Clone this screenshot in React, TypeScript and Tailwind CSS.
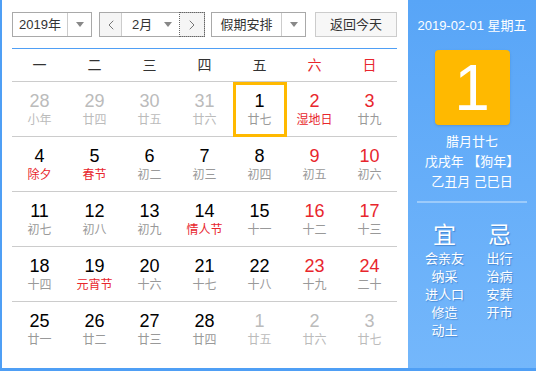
import { ChevronLeft, ChevronRight } from 'lucide-react'

type Day = {
    d: number
    lunar: string
    other?: boolean
    weekend?: boolean
    festival?: boolean
    today?: boolean
}

const weeks: Day[][] = [
    [
        { d: 28, lunar: '小年', other: true },
        { d: 29, lunar: '廿四', other: true },
        { d: 30, lunar: '廿五', other: true },
        { d: 31, lunar: '廿六', other: true },
        { d: 1, lunar: '廿七', today: true },
        { d: 2, lunar: '湿地日', weekend: true, festival: true },
        { d: 3, lunar: '廿九', weekend: true },
    ],
    [
        { d: 4, lunar: '除夕', festival: true },
        { d: 5, lunar: '春节', festival: true },
        { d: 6, lunar: '初二' },
        { d: 7, lunar: '初三' },
        { d: 8, lunar: '初四' },
        { d: 9, lunar: '初五', weekend: true },
        { d: 10, lunar: '初六', weekend: true },
    ],
    [
        { d: 11, lunar: '初七' },
        { d: 12, lunar: '初八' },
        { d: 13, lunar: '初九' },
        { d: 14, lunar: '情人节', festival: true },
        { d: 15, lunar: '十一' },
        { d: 16, lunar: '十二', weekend: true },
        { d: 17, lunar: '十三', weekend: true },
    ],
    [
        { d: 18, lunar: '十四' },
        { d: 19, lunar: '元宵节', festival: true },
        { d: 20, lunar: '十六' },
        { d: 21, lunar: '十七' },
        { d: 22, lunar: '十八' },
        { d: 23, lunar: '十九', weekend: true },
        { d: 24, lunar: '二十', weekend: true },
    ],
    [
        { d: 25, lunar: '廿一' },
        { d: 26, lunar: '廿二' },
        { d: 27, lunar: '廿三' },
        { d: 28, lunar: '廿四' },
        { d: 1, lunar: '廿五', other: true },
        { d: 2, lunar: '廿六', other: true },
        { d: 3, lunar: '廿七', other: true },
    ],
]

const weekNames = ['一', '二', '三', '四', '五', '六', '日']

const yi = ['会亲友', '纳采', '进人口', '修造', '动土']
const ji = ['出行', '治病', '安葬', '开市']

function Caret() {
    return <span className="w-0 h-0 border-x-[4px] border-x-transparent border-t-[5px] border-t-[#888]" />
}

function DayCell({ day }: { day: Day }) {
    let numColor = 'text-black'
    let lunarColor = 'text-[#999]'
    if (day.weekend) numColor = 'text-[#e8262d]'
    if (day.festival) lunarColor = 'text-[#e8262d]'
    if (day.other) {
        numColor = 'text-[#bbb]'
        lunarColor = 'text-[#bbb]'
    }
    return (
        <div className="h-[54px] flex items-center justify-center">
            <div
                className={
                    'w-[54px] h-[55px] flex flex-col items-center justify-center ' +
                    (day.today ? 'border-[3px] border-[#ffb900]' : '')
                }
            >
                <span className={'text-[18px] leading-[22px] ' + numColor}>{day.d}</span>
                <span className={'text-[12px] leading-[16px] ' + lunarColor}>{day.lunar}</span>
            </div>
        </div>
    )
}

export default function App() {
    return (
        <div
            className="w-[536px] h-[371px] flex bg-white border-l-2 border-b-[3px] border-[#4f9ff5] overflow-hidden"
            style={{ fontFamily: '"Liberation Sans", "Noto Sans CJK SC", sans-serif' }}
        >
            {/* Left */}
            <div className="w-[406px] pl-[10px] pt-[12px]">
                <div className="flex items-center h-[25px] text-[13px] text-[#333]">
                    <div className="w-[80px] h-[25px] flex border border-[#a9a9a9] bg-white">
                        <div className="w-[54px] flex items-center justify-center">2019年</div>
                        <div className="flex-1 flex items-center justify-center border-l border-[#ccc]">
                            <Caret />
                        </div>
                    </div>
                    <div className="ml-[7px] w-[106px] h-[25px] flex border border-[#a9a9a9] bg-white">
                        <div className="w-[22px] flex items-center justify-center bg-[#f5f5f5] border-r border-[#ccc] text-[#555]">
                            <ChevronLeft size={16} strokeWidth={1.2} />
                        </div>
                        <div className="flex-1 flex items-center justify-between pl-[10px] pr-[8px]">
                            <span>2月</span>
                            <Caret />
                        </div>
                        <div className="w-[24px] flex items-center justify-center bg-[#f5f5f5] outline outline-1 outline-dotted outline-[#666] text-[#555]">
                            <ChevronRight size={16} strokeWidth={1.2} />
                        </div>
                    </div>
                    <div className="ml-[6px] w-[95px] h-[25px] flex border border-[#a9a9a9] bg-white">
                        <div className="w-[69px] flex items-center justify-center">假期安排</div>
                        <div className="flex-1 flex items-center justify-center border-l border-[#ccc]">
                            <Caret />
                        </div>
                    </div>
                    <div className="ml-[9px] w-[82px] h-[25px] flex items-center justify-center border border-[#ccc] bg-[#f7f7f7]">
                        返回今天
                    </div>
                </div>

                <div className="w-[385px] mt-[11px] border-t border-[#4f9ff5]">
                    <div className="grid grid-cols-7 h-[33px] border-b border-[#ccc] text-[14px]">
                        {weekNames.map((w, i) => (
                            <div
                                key={w}
                                className={
                                    'flex items-center justify-center ' +
                                    (i >= 5 ? 'text-[#e8262d]' : 'text-[#333]')
                                }
                            >
                                {w}
                            </div>
                        ))}
                    </div>
                    {weeks.map((wk, i) => (
                        <div
                            key={i}
                            className={'grid grid-cols-7 ' + (i < weeks.length - 1 ? 'border-b border-[#ccc]' : '')}
                        >
                            {wk.map((day, j) => (
                                <DayCell key={j} day={day} />
                            ))}
                        </div>
                    ))}
                </div>
            </div>

            {/* Right */}
            <div className="flex-1 bg-gradient-to-b from-[#58a5f7] to-[#74b7fb] text-white flex flex-col items-center">
                <div className="mt-[18px] text-[13px] leading-[16px]">2019-02-01 星期五</div>
                <div className="mt-[16px] w-[75px] h-[75px] rounded-[4px] bg-[#ffb900] flex items-center justify-center text-[64px] leading-none shadow-sm">
                    1
                </div>
                <div className="mt-[7px] text-[13px] leading-[20px] flex flex-col items-center">
                    <span>腊月廿七</span>
                    <span>戊戌年 【狗年】</span>
                    <span>乙丑月 己巳日</span>
                </div>
                <div className="mt-[9px] w-[110px] h-[2px] bg-[#9ccbfb]" />
                <div className="mt-[18px] w-[110px] grid grid-cols-2 [text-shadow:1px_1px_1px_rgba(0,60,140,0.35)]">
                    <div className="flex flex-col items-center">
                        <span className="text-[23px] leading-[28px] mb-[1px]">宜</span>
                        {yi.map((t) => (
                            <span key={t} className="text-[13px] leading-[18px]">{t}</span>
                        ))}
                    </div>
                    <div className="flex flex-col items-center">
                        <span className="text-[23px] leading-[28px] mb-[1px]">忌</span>
                        {ji.map((t) => (
                            <span key={t} className="text-[13px] leading-[18px]">{t}</span>
                        ))}
                    </div>
                </div>
            </div>
        </div>
    )
}
